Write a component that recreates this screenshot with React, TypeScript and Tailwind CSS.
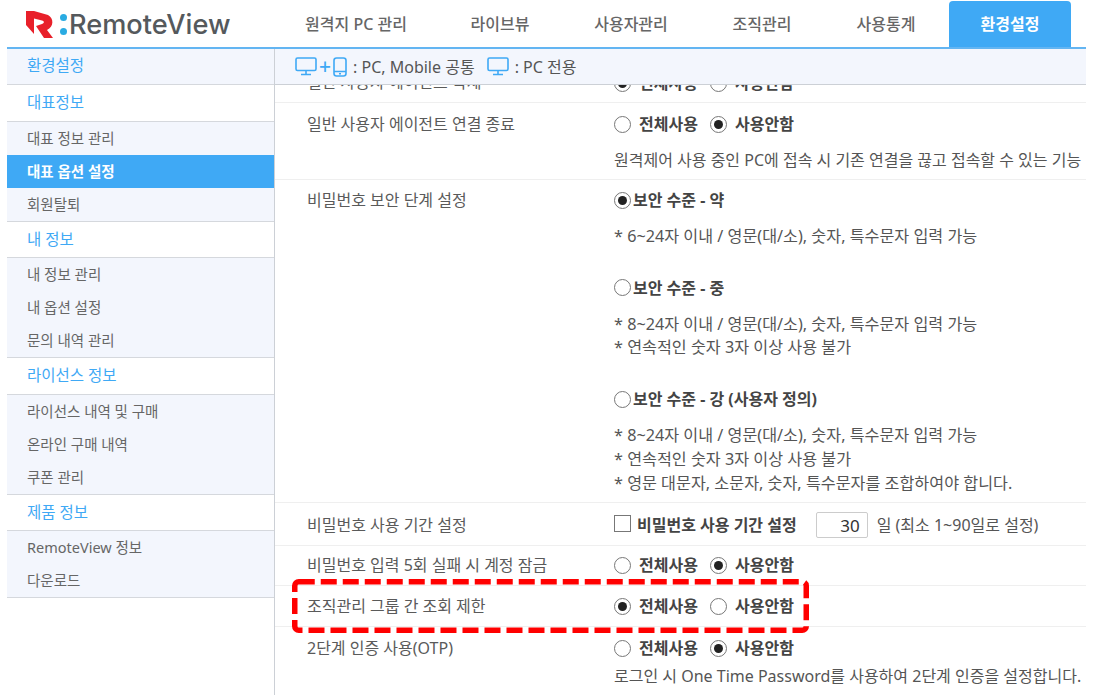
import React from 'react';

const FONT = "font-['Noto_Sans','Noto_Sans_CJK_KR',sans-serif]";

const tabs = [
  { label: '원격지 PC 관리', w: 'w-[166px]' },
  { label: '라이브뷰', w: 'w-[122px]' },
  { label: '사용자관리', w: 'w-[140px]' },
  { label: '조직관리', w: 'w-[122px]' },
  { label: '사용통계', w: 'w-[126px]' },
];

const sideGroups = [
  { title: '대표정보', items: ['대표 정보 관리', '대표 옵션 설정', '회원탈퇴'] },
  { title: '내 정보', items: ['내 정보 관리', '내 옵션 설정', '문의 내역 관리'] },
  { title: '라이선스 정보', items: ['라이선스 내역 및 구매', '온라인 구매 내역', '쿠폰 관리'] },
  { title: '제품 정보', items: ['RemoteView 정보', '다운로드'] },
];

const Monitor = () => (
  <svg width="22" height="19" viewBox="0 0 22 19" fill="none" stroke="#3fa9f5" strokeWidth="1.6">
    <rect x="1" y="1" width="20" height="12.5" rx="1.5" />
    <path d="M11 13.5V17M6 17.5H16" />
  </svg>
);

const Phone = () => (
  <svg width="14" height="20" viewBox="0 0 14 20" fill="none" stroke="#3fa9f5" strokeWidth="1.6">
    <rect x="1" y="1" width="12" height="18" rx="2.5" />
    <path d="M1 14.5H13M6 16.8H8" />
  </svg>
);

const Radio = ({ on }: { on?: boolean }) => (
  <span className="w-[17px] h-[17px] rounded-full border border-[#777] bg-white flex items-center justify-center shrink-0">
    {on && <span className="w-[9px] h-[9px] rounded-full bg-[#222]" />}
  </span>
);

const RadioPair = ({ first }: { first: boolean }) => (
  <div className="flex items-center h-[20px] text-[16px] font-bold text-[#444]">
    <Radio on={first} />
    <span className="ml-[8px] w-[71px]">전체사용</span>
    <Radio on={!first} />
    <span className="ml-[8px]">사용안함</span>
  </div>
);

const Level = ({ on, title, notes, className }: { on?: boolean; title: string; notes: string[]; className?: string }) => (
  <div className={className}>
    <div className="flex items-center h-[20px] text-[16px] font-bold text-[#444]">
      <Radio on={on} />
      <span className="ml-[2px]">{title}</span>
    </div>
    <div className="mt-[15px] text-[16.2px] leading-[23.7px] text-[#555]">
      {notes.map((n) => (
        <div key={n}>{n}</div>
      ))}
    </div>
  </div>
);

const Row = ({ label, className, children }: { label: string; className?: string; children: React.ReactNode }) => (
  <div className={`flex border-b border-[#efefef] ${className ?? ''}`}>
    <div className="w-[339px] pl-[32px] shrink-0 text-[16px] leading-[20px] text-[#5a5a5a]">{label}</div>
    <div className="flex-1 min-w-0 whitespace-nowrap">{children}</div>
  </div>
);

const note1 = '* 6~24자 이내 / 영문(대/소), 숫자, 특수문자 입력 가능';
const note2 = '* 8~24자 이내 / 영문(대/소), 숫자, 특수문자 입력 가능';
const note3 = '* 연속적인 숫자 3자 이상 사용 불가';
const note4 = '* 영문 대문자, 소문자, 숫자, 특수문자를 조합하여야 합니다.';

export default function App() {
  return (
    <div className={`relative w-[1096px] h-[695px] overflow-hidden bg-white ${FONT}`}>
      {/* Header */}
      <div className="flex h-[47px] pl-[26px]">
        <div className="w-[247px] flex items-center pt-[2px] shrink-0">
          <svg width="28" height="28" viewBox="0 0 28 28" className="shrink-0">
            <path d="M0 0 L8 0 L22 4 C28 7 28 16 21 19 L27 27 L18 27 L10 15 L16 13 C19 12 18 10 16 9.5 L8 7.5 L8 23 L0 14 Z" fill="#e8202a" />
          </svg>
          <span className="flex flex-col gap-[7px] ml-[6px] mr-[2px]">
            <span className="w-[7px] h-[7px] rounded-full bg-[#29abe2]" />
            <span className="w-[7px] h-[7px] rounded-full bg-[#29abe2]" />
          </span>
          <span className="text-[27.2px] leading-none font-medium font-['Inter',sans-serif] text-[#55595c]">RemoteView</span>
        </div>
        <nav className="flex items-end h-[47px]">
          {tabs.map((t) => (
            <div key={t.label} className={`text-[16px] font-medium text-[#666] text-center h-[46px] leading-[46px] ${t.w}`}>
              {t.label}
            </div>
          ))}
          <div className="w-[122px] h-[46px] leading-[46px] rounded-t-[4px] bg-[#3fa9f5] text-white text-[16px] font-bold text-center">
            환경설정
          </div>
        </nav>
      </div>

      {/* Body */}
      <div className="ml-[7px] w-[1079px] h-[648px] flex border-t-2 border-[#63b5f2]">
        {/* Sidebar */}
        <aside className="w-[268px] shrink-0 border-r border-[#ccd0d6]">
          <div className="h-[36px] leading-[33px] pl-[20px] bg-[#f3f6fd] text-[15.5px] text-[#3fa9f5] border-b border-[#d5d8dd]">환경설정</div>
          {sideGroups.map((g) => (
            <div key={g.title} className="border-b border-[#d5d8dd]">
              <div className="h-[36.5px] leading-[34px] pl-[20px] bg-white text-[15.5px] text-[#3fa9f5] border-b border-[#d5d8dd]">{g.title}</div>
              {g.items.map((it) => (
                <div
                  key={it}
                  className={
                    it === '대표 옵션 설정'
                      ? 'h-[33px] leading-[32px] pl-[20px] bg-[#3fa9f5] text-white text-[14.5px] font-bold'
                      : 'h-[33px] leading-[32px] pl-[20px] bg-[#f3f6fd] text-[#666] text-[14.5px]'
                  }
                >
                  {it}
                </div>
              ))}
            </div>
          ))}
        </aside>

        {/* Main */}
        <main className="flex-1 min-w-0 overflow-hidden flex flex-col">
          <div className="h-[36px] shrink-0 bg-[#f3f6fd] border-b border-[#ccd0d6] flex items-center pl-[20px] text-[16px] text-[#555]">
            <Monitor />
            <span className="text-[#3fa9f5] text-[21px] leading-none mx-[2px] font-medium">+</span>
            <Phone />
            <span className="ml-[6px]">: PC, Mobile 공통</span>
            <span className="ml-[12px] flex items-center"><Monitor /></span>
            <span className="ml-[6px]">: PC 전용</span>
          </div>

          {/* First row, scrolled up behind the bar */}
          <div className="h-[18px] shrink-0 overflow-hidden flex border-b border-[#efefef]">
            <div className="w-[339px] pl-[32px] shrink-0 text-[16px] leading-[20px] text-[#5a5a5a] -mt-[13px]">일반 사용자 에이전트 삭제</div>
            <div className="-mt-[12px] h-[20px]"><RadioPair first /></div>
          </div>

          <Row label="일반 사용자 에이전트 연결 종료" className="h-[77px] pt-[11px]">
            <RadioPair first={false} />
            <div className="mt-[16px] text-[16px] leading-[20px] text-[#555]">원격제어 사용 중인 PC에 접속 시 기존 연결을 끊고 접속할 수 있는 기능</div>
          </Row>

          <Row label="비밀번호 보안 단계 설정" className="h-[323px] pt-[10px]">
            <Level on title="보안 수준 - 약" notes={[note1]} />
            <Level title="보안 수준 - 중" notes={[note2, note3]} className="mt-[29px]" />
            <Level title="보안 수준 - 강 (사용자 정의)" notes={[note2, note3, note4]} className="mt-[29px]" />
          </Row>

          <Row label="비밀번호 사용 기간 설정" className="h-[43px] pt-[12px]">
            <div className="flex items-center h-[20px] text-[16px] text-[#444]">
              <span className="w-[17px] h-[17px] border border-[#777] mb-[3px]" />
              <span className="ml-[6px] font-bold">비밀번호 사용 기간 설정</span>
              <span className="ml-[19px] w-[52px] h-[26px] border border-[#ccc] rounded-[2px] text-right pr-[7px] text-[17px] leading-[25px] text-[#333]">30</span>
              <span className="ml-[9px] text-[#555]">일 (최소 1~90일로 설정)</span>
            </div>
          </Row>

          <Row label="비밀번호 입력 5회 실패 시 계정 잠금" className="h-[40px] pt-[9px]">
            <RadioPair first={false} />
          </Row>
          <Row label="조직관리 그룹 간 조회 제한" className="h-[41px] pt-[10px]">
            <RadioPair first />
          </Row>
          <div className="flex pt-[11px]">
            <div className="w-[339px] pl-[32px] shrink-0 text-[16px] leading-[20px] text-[#5a5a5a]">2단계 인증 사용(OTP)</div>
            <div className="flex-1 min-w-0 whitespace-nowrap">
              <RadioPair first={false} />
              <div className="mt-[8px] text-[16px] leading-[20px] text-[#555]">로그인 시 One Time Password를 사용하여 2단계 인증을 설정합니다.</div>
            </div>
          </div>
        </main>
      </div>

      {/* Red callout over the row */}
      <svg className="absolute left-[292px] top-[579px]" width="517" height="54" viewBox="0 0 517 54" fill="none">
        <rect x="2.75" y="2.75" width="511.5" height="48.5" rx="4" stroke="#ff0000" strokeWidth="5.5" strokeDasharray="16 6" />
      </svg>
    </div>
  );
}
